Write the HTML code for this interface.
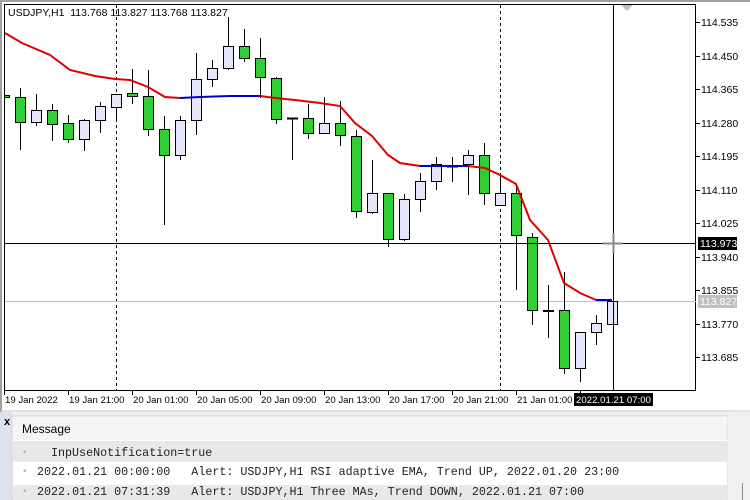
<!DOCTYPE html>
<html><head><meta charset="utf-8"><style>
body{margin:0;width:750px;height:500px;overflow:hidden;background:#fff;font-family:"Liberation Sans",sans-serif}
text{white-space:pre}
</style></head><body>
<svg width="750" height="500" xmlns="http://www.w3.org/2000/svg" style="position:absolute;left:0;top:0" xml:space="preserve">
<rect x="0" y="0" width="750" height="412" fill="#fff"/>
<line x1="0" y1="1" x2="750" y2="1" stroke="#a0a0a0" stroke-width="2"/>
<line x1="1" y1="0" x2="1" y2="412" stroke="#a0a0a0" stroke-width="2"/>
<line x1="0" y1="411" x2="750" y2="411" stroke="#c8c8c8"/>
<rect x="4.5" y="4.5" width="691" height="386" fill="none" stroke="#000"/>
<polygon points="621,5 633,5 627,11" fill="#c0c0c0"/>
<g stroke="#000" stroke-dasharray="3,3"><line x1="116.5" y1="5" x2="116.5" y2="390"/><line x1="500.5" y1="5" x2="500.5" y2="390"/></g>
<line x1="5" y1="301.5" x2="696" y2="301.5" stroke="#c0c0c0"/>
<g stroke="#000" stroke-width="1">
<line x1="20.5" y1="88" x2="20.5" y2="150"/><line x1="36.5" y1="94" x2="36.5" y2="126"/><line x1="52.5" y1="104" x2="52.5" y2="141"/><line x1="68.5" y1="115" x2="68.5" y2="143"/><line x1="84.5" y1="119" x2="84.5" y2="151"/><line x1="100.5" y1="102" x2="100.5" y2="133"/><line x1="116.5" y1="94" x2="116.5" y2="121"/><line x1="132.5" y1="69" x2="132.5" y2="104"/><line x1="148.5" y1="70" x2="148.5" y2="136"/><line x1="164.5" y1="116" x2="164.5" y2="225"/><line x1="180.5" y1="116" x2="180.5" y2="160"/><line x1="196.5" y1="53" x2="196.5" y2="135"/><line x1="212.5" y1="60" x2="212.5" y2="87"/><line x1="228.5" y1="17" x2="228.5" y2="70"/><line x1="244.5" y1="29" x2="244.5" y2="62"/><line x1="260.5" y1="38" x2="260.5" y2="98"/><line x1="276.5" y1="77" x2="276.5" y2="124"/><line x1="292.5" y1="118" x2="292.5" y2="160"/><line x1="308.5" y1="104" x2="308.5" y2="139"/><line x1="324.5" y1="97" x2="324.5" y2="133"/><line x1="340.5" y1="101" x2="340.5" y2="146"/><line x1="356.5" y1="130" x2="356.5" y2="218"/><line x1="372.5" y1="160" x2="372.5" y2="214"/><line x1="388.5" y1="193" x2="388.5" y2="247"/><line x1="404.5" y1="194" x2="404.5" y2="241"/><line x1="420.5" y1="173" x2="420.5" y2="212"/><line x1="436.5" y1="157" x2="436.5" y2="190"/><line x1="452.5" y1="157" x2="452.5" y2="182"/><line x1="468.5" y1="150" x2="468.5" y2="195"/><line x1="484.5" y1="143" x2="484.5" y2="205"/><line x1="500.5" y1="175" x2="500.5" y2="205"/><line x1="516.5" y1="185" x2="516.5" y2="290"/><line x1="532.5" y1="233" x2="532.5" y2="325"/><line x1="548.5" y1="285" x2="548.5" y2="338"/><line x1="564.5" y1="272" x2="564.5" y2="374"/><line x1="580.5" y1="332" x2="580.5" y2="382"/><line x1="596.5" y1="315" x2="596.5" y2="345"/>
</g>
<g stroke="#000" stroke-width="1">
<rect x="4.5" y="95.5" width="5" height="2" fill="#32cd32"/>
<rect x="15.5" y="97.5" width="10" height="25" fill="#32cd32"/>
<rect x="31.5" y="110.5" width="10" height="12" fill="#e6e6fa"/>
<rect x="47.5" y="110.5" width="10" height="14" fill="#32cd32"/>
<rect x="63.5" y="123.5" width="10" height="16" fill="#32cd32"/>
<rect x="79.5" y="120.5" width="10" height="19" fill="#e6e6fa"/>
<rect x="95.5" y="106.5" width="10" height="14" fill="#e6e6fa"/>
<rect x="111.5" y="94.5" width="10" height="13" fill="#e6e6fa"/>
<rect x="127.5" y="93.5" width="10" height="3" fill="#32cd32"/>
<rect x="143.5" y="96.5" width="10" height="33" fill="#32cd32"/>
<rect x="159.5" y="129.5" width="10" height="26" fill="#32cd32"/>
<rect x="175.5" y="120.5" width="10" height="35" fill="#e6e6fa"/>
<rect x="191.5" y="79.5" width="10" height="41" fill="#e6e6fa"/>
<rect x="207.5" y="68.5" width="10" height="11" fill="#e6e6fa"/>
<rect x="223.5" y="46.5" width="10" height="22" fill="#e6e6fa"/>
<rect x="239.5" y="46.5" width="10" height="12" fill="#32cd32"/>
<rect x="255.5" y="58.5" width="10" height="19" fill="#32cd32"/>
<rect x="271.5" y="78.5" width="10" height="41" fill="#32cd32"/>
<rect x="287.5" y="118" width="10" height="1" fill="#000"/>
<rect x="303.5" y="118.5" width="10" height="15" fill="#32cd32"/>
<rect x="319.5" y="123.5" width="10" height="10" fill="#e6e6fa"/>
<rect x="335.5" y="123.5" width="10" height="12" fill="#32cd32"/>
<rect x="351.5" y="136.5" width="10" height="75" fill="#32cd32"/>
<rect x="367.5" y="193.5" width="10" height="19" fill="#e6e6fa"/>
<rect x="383.5" y="193.5" width="10" height="46" fill="#32cd32"/>
<rect x="399.5" y="199.5" width="10" height="40" fill="#e6e6fa"/>
<rect x="415.5" y="181.5" width="10" height="18" fill="#e6e6fa"/>
<rect x="431.5" y="164.5" width="10" height="17" fill="#e6e6fa"/>
<rect x="447.5" y="166" width="10" height="1" fill="#000"/>
<rect x="463.5" y="155.5" width="10" height="9" fill="#e6e6fa"/>
<rect x="479.5" y="155.5" width="10" height="38" fill="#32cd32"/>
<rect x="495.5" y="193.5" width="10" height="12" fill="#e6e6fa"/>
<rect x="511.5" y="193.5" width="10" height="42" fill="#32cd32"/>
<rect x="527.5" y="237.5" width="10" height="73" fill="#32cd32"/>
<rect x="543.5" y="310.5" width="10" height="1" fill="#e6e6fa"/>
<rect x="559.5" y="310.5" width="10" height="58" fill="#32cd32"/>
<rect x="575.5" y="332.5" width="10" height="36" fill="#e6e6fa"/>
<rect x="591.5" y="323.5" width="10" height="9" fill="#e6e6fa"/>
<rect x="607.5" y="301.5" width="10" height="23" fill="#e6e6fa"/>
</g>
<g fill="none" stroke-width="2">
<polyline stroke="#e00000" points="5,33 22,43 50,55 70,70 95,76 115,79 130,80 148,87 165,97 180,98"/>
<polyline stroke="#0000d0" points="180,98 200,97 230,96 260,96"/>
<polyline stroke="#e00000" points="260,96 275,98 295,100 320,103 340,106 355,123 372,136 388,155 400,163 420,166"/>
<polyline stroke="#0000d0" points="420,166 468,166"/>
<polyline stroke="#e00000" points="468,166 485,168 500,175 516,184 530,220 548,240 564,283 580,293 596,300"/>
<polyline stroke="#0000d0" points="596,300 612,300"/>
</g>
<line x1="5" y1="243.5" x2="696" y2="243.5" stroke="#000"/>
<line x1="613.5" y1="5" x2="613.5" y2="390" stroke="#000"/>
<path d="M603,243.5h20M613.5,233v20" stroke="#888" stroke-width="2"/>
<g font-family="Liberation Sans" font-size="10.5" fill="#000">
<text x="8" y="16">USDJPY,H1  113.768 113.827 113.768 113.827</text>
<g stroke="#000"><path d="M696,22.5h4M696,56.5h4M696,89.5h4M696,123.5h4M696,156.5h4M696,190.5h4M696,223.5h4M696,257.5h4M696,290.5h4M696,324.5h4M696,357.5h4"/></g>
<text x="701" y="26">114.535</text><text x="701" y="60">114.450</text><text x="701" y="93">114.365</text><text x="701" y="127">114.280</text><text x="701" y="160">114.195</text><text x="701" y="194">114.110</text><text x="701" y="227">114.025</text><text x="701" y="261">113.940</text><text x="701" y="294">113.855</text><text x="701" y="328">113.770</text><text x="701" y="361">113.685</text>
<rect x="698" y="237" width="39" height="13" fill="#000"/><text x="700" y="247" fill="#fff">113.973</text>
<rect x="698" y="295" width="39" height="13" fill="#c0c0c0"/><text x="700" y="305" fill="#fff">113.827</text>
<g stroke="#000"><path d="M4.5,390v5M68.5,390v5M132.5,390v5M196.5,390v5M260.5,390v5M324.5,390v5M388.5,390v5M452.5,390v5M516.5,390v5M580.5,390v5"/></g>
<g font-size="9.6"><text x="5" y="403">19 Jan 2022</text><text x="69" y="403">19 Jan 21:00</text><text x="133" y="403">20 Jan 01:00</text><text x="197" y="403">20 Jan 05:00</text><text x="261" y="403">20 Jan 09:00</text><text x="325" y="403">20 Jan 13:00</text><text x="389" y="403">20 Jan 17:00</text><text x="453" y="403">20 Jan 21:00</text><text x="517" y="403">21 Jan 01:00</text>
<rect x="574" y="393" width="79" height="13" fill="#000"/><text x="576" y="403" fill="#fff" textLength="75">2022.01.21 07:00</text></g>
</g>
<rect x="0" y="412" width="750" height="88" fill="#f0f0f0"/>
<rect x="0" y="412" width="12" height="88" fill="#dde3ec"/>
<text x="4" y="425" font-family="Liberation Sans" font-size="11" font-weight="bold">x</text>
<rect x="12" y="416" width="716" height="84" fill="#fff" stroke="#d0d0d0"/>
<rect x="13" y="417" width="714" height="23" fill="#f5f5f5"/>
<text x="22" y="433" font-family="Liberation Sans" font-size="12">Message</text>
<rect x="13" y="441" width="714" height="21" fill="#e8e8e8"/>
<rect x="13" y="463" width="714" height="21" fill="#fff"/>
<rect x="13" y="485" width="714" height="15" fill="#e8e8e8"/>
<g font-family="Liberation Mono" font-size="11.7" fill="#222">
<text x="22" y="455" fill="#aaa" font-size="9">•</text><text x="51" y="456">InpUseNotification=true</text>
<text x="22" y="474" fill="#aaa" font-size="9">•</text><text x="37" y="475">2022.01.21 00:00:00   Alert: USDJPY,H1 RSI adaptive EMA, Trend UP, 2022.01.20 23:00</text>
<text x="22" y="494" fill="#aaa" font-size="9">•</text><text x="37" y="495">2022.01.21 07:31:39   Alert: USDJPY,H1 Three MAs, Trend DOWN, 2022.01.21 07:00</text>
</g>
<rect x="728" y="416" width="22" height="84" fill="#f0f0f0"/>
<line x1="742.5" y1="483" x2="742.5" y2="500" stroke="#888"/>
</svg>
</body></html>
